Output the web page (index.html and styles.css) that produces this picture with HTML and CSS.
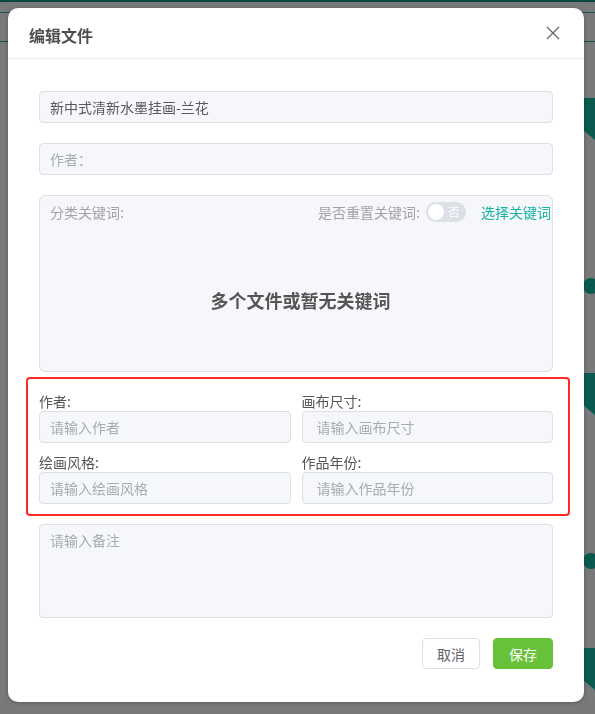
FILE: index.html
```html
<!DOCTYPE html>
<html lang="zh-CN">
<head>
<meta charset="utf-8">
<title>编辑文件</title>
<link rel="stylesheet" href="styles.css">
</head>
<body>
<div class="page">
  <div class="topbar"></div>
  <div class="tabs"></div>
  <div class="cards">
    <div class="card"><span class="ribbon"></span><span class="dot"></span></div>
    <div class="card"><span class="ribbon"></span><span class="dot"></span></div>
    <div class="card short"><span class="ribbon"></span></div>
  </div>
</div>

<div class="overlay">
  <div class="dialog">
    <div class="dialog-header">
      <span class="dialog-title">编辑文件</span>
      <button class="close" aria-label="关闭">
        <svg width="14" height="14" viewBox="0 0 14 14"><path d="M1 1L13 13M13 1L1 13" stroke="#666" stroke-width="1.3" fill="none"/></svg>
      </button>
    </div>
    <div class="dialog-body">
      <input class="input" value="新中式清新水墨挂画-兰花">
      <input class="input gap" placeholder="作者：">
      <div class="keywords">
        <div class="kw-head">
          <span class="kw-label">分类关键词:</span>
          <span class="kw-reset">是否重置关键词:</span>
          <span class="switch"><span class="knob"></span><span class="switch-text">否</span></span>
          <a class="kw-link">选择关键词</a>
        </div>
        <div class="kw-empty">多个文件或暂无关键词</div>
      </div>
      <div class="highlight">
        <div class="field"><label class="field-label">作者:</label><input class="input" placeholder="请输入作者"></div>
        <div class="field right"><label class="field-label">画布尺寸:</label><input class="input" placeholder="请输入画布尺寸"></div>
        <div class="field"><label class="field-label">绘画风格:</label><input class="input" placeholder="请输入绘画风格"></div>
        <div class="field right"><label class="field-label">作品年份:</label><input class="input" placeholder="请输入作品年份"></div>
      </div>
      <textarea class="textarea" placeholder="请输入备注"></textarea>
    </div>
    <div class="dialog-footer">
      <button class="btn">取消</button>
      <button class="btn primary">保存</button>
    </div>
  </div>
</div>
</body>
</html>
```

FILE: styles.css
```css
* { box-sizing: border-box; margin: 0; padding: 0; }
html, body { width: 595px; height: 714px; overflow: hidden; }
body {
  font-family: "Noto Sans CJK SC", "Noto Sans", sans-serif;
  font-size: 14px;
  color: #606266;
  background: #f0f2f5;
}

/* background page */
.page { height: 714px; overflow: hidden; }
.topbar { height: 2px; background: #14907f; }
.tabs {
  margin-top: 10px;
  height: 30px;
  border-top: 1px solid #2aa597;
  border-bottom: 1px solid #2aa597;
}
.cards {
  display: flex;
  flex-direction: column;
  align-items: flex-end;
  padding-top: 56px;
}
.card { position: relative; width: 200px; height: 275px; }
.card.short { height: 60px; }
.ribbon {
  position: absolute;
  top: 0;
  right: 0;
  width: 12px;
  height: 42px;
  background: #16b4a0;
  clip-path: polygon(0 0, 100% 0, 100% 100%, 0 76%);
}
.dot {
  position: absolute;
  top: 180px;
  right: -4px;
  width: 16px;
  height: 16px;
  border-radius: 50%;
  background: #16b4a0;
}

/* overlay + dialog */
.overlay {
  position: fixed;
  inset: 0;
  background: rgba(0, 0, 0, 0.5);
  padding: 8px 11px 0 8px;
}
.dialog {
  width: 576px;
  height: 694px;
  background: #fff;
  border-radius: 10px;
  display: flex;
  flex-direction: column;
  box-shadow: 0 1px 4px rgba(0, 0, 0, 0.25);
}
.dialog-header {
  height: 51px;
  border-bottom: 1px solid #ebeef5;
  display: flex;
  align-items: center;
  justify-content: space-between;
  padding: 3px 24px 0 21px;
}
.dialog-title { font-size: 16px; font-weight: 700; color: #4f4f4f; }
.close {
  width: 14px;
  height: 14px;
  border: 0;
  background: none;
  display: flex;
  margin-top: -3px;
}

.dialog-body { padding: 32px 31px 0; }

.input {
  display: block;
  width: 100%;
  height: 32px;
  border: 1px solid #dcdfe6;
  border-radius: 4px;
  background: #f5f7fa;
  padding: 0 10px;
  font: inherit;
  font-size: 14px;
  color: #5a5a5a;
  outline: none;
}
.input::placeholder, .textarea::placeholder { color: #a8abb2; }
.input.gap { margin-top: 20px; }
.field.right .input { padding-left: 14px; }

.keywords {
  height: 177px;
  margin-top: 20px;
  border: 1px solid #dcdfe6;
  border-radius: 6px;
  background: #f5f7fa;
  display: flex;
  flex-direction: column;
  padding: 6px 1px 0 10px;
}
.kw-head {
  display: flex;
  align-items: center;
  height: 20px;
  line-height: 20px;
  color: #a3a3a3;
}
.kw-label { flex: 1; }
.switch {
  margin-left: 6px;
  width: 40px;
  height: 20px;
  border-radius: 10px;
  background: #dcdfe6;
  display: flex;
  align-items: center;
  justify-content: space-between;
  padding: 0 6px 0 2px;
}
.knob { width: 16px; height: 16px; border-radius: 50%; background: #fff; }
.switch-text { font-size: 12px; color: #fff; line-height: 20px; }
.kw-link { margin-left: 15px; color: #17b3a3; }
.kw-empty {
  flex: 1;
  display: flex;
  align-items: center;
  justify-content: center;
  font-size: 18px;
  font-weight: 700;
  color: #555;
  padding-top: 6px;
}

.highlight {
  margin: 5px -17px 8px -13px;
  border: 2px solid #ff2a1f;
  border-radius: 4px;
  padding: 12px 15px 10px 11px;
  display: grid;
  grid-template-columns: 1fr 1fr;
  column-gap: 11px;
  row-gap: 9px;
}
.field-label { display: block; height: 20px; line-height: 20px; color: #555; }

.textarea {
  display: block;
  width: 100%;
  height: 94px;
  border: 1px solid #dcdfe6;
  border-radius: 4px;
  background: #f5f7fa;
  padding: 4px 10px;
  font: inherit;
  font-size: 14px;
  line-height: 22px;
  resize: none;
  outline: none;
}

.dialog-footer {
  display: flex;
  justify-content: flex-end;
  gap: 13px;
  padding: 20px 31px 33px;
}
.btn {
  height: 31px;
  padding: 0 14px;
  border: 1px solid #dcdfe6;
  border-radius: 4px;
  background: #fff;
  font: inherit;
  font-size: 14px;
  color: #606266;
}
.btn.primary {
  background: #67c23a;
  border-color: #67c23a;
  color: #fff;
  padding: 0 15px;
}
```
